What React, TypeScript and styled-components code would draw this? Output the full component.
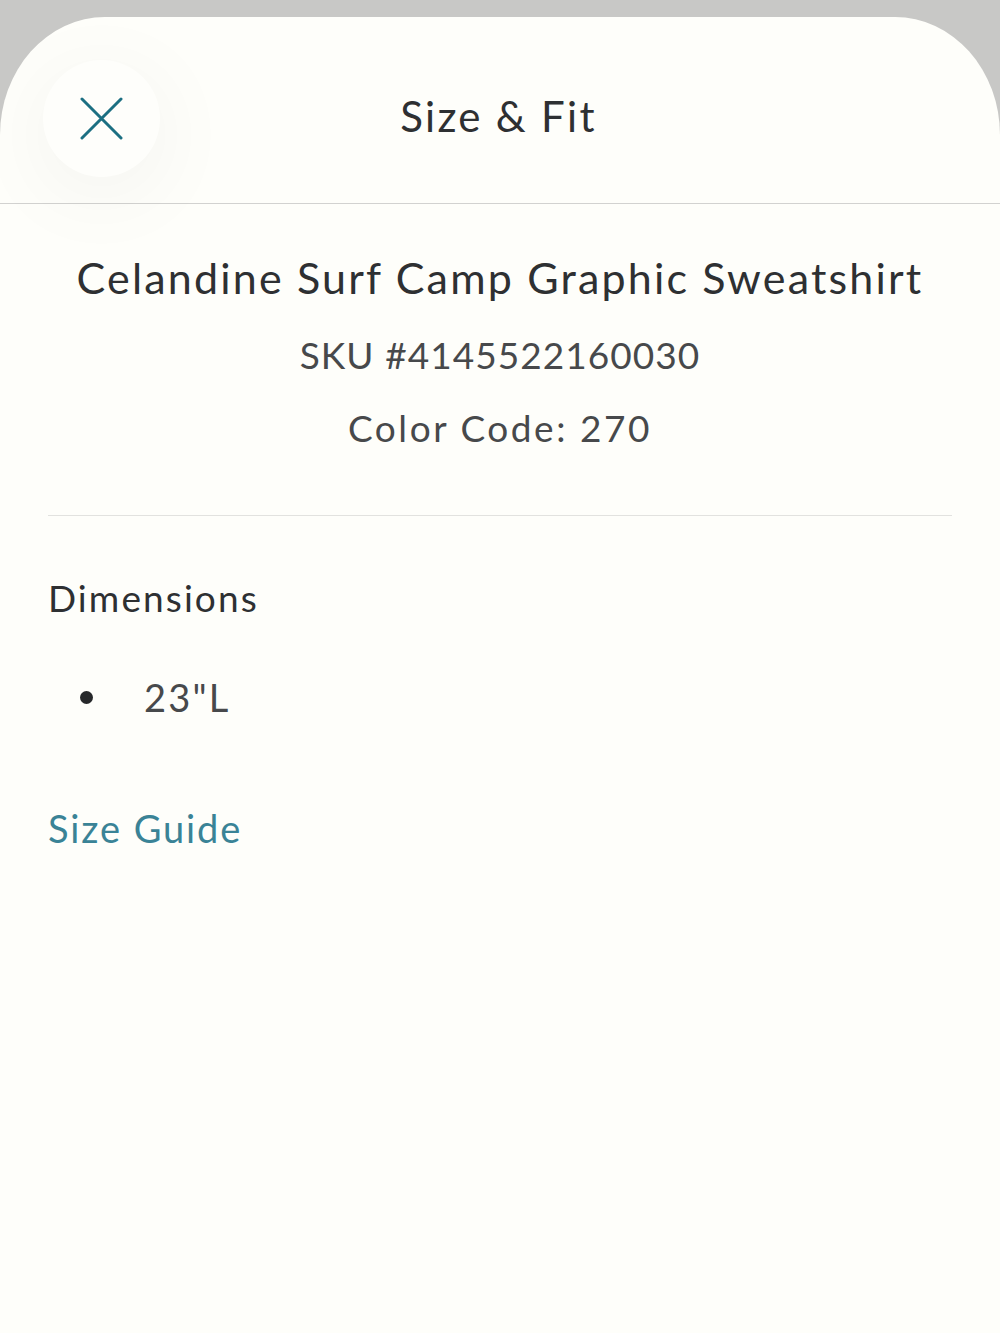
import React from "react";
import styled, { createGlobalStyle } from "styled-components";

const GlobalStyle = createGlobalStyle`
  html, body {
    margin: 0;
    padding: 0;
    background: #c8c8c6;
  }
`;

const Page = styled.div`
  width: 1000px;
  height: 1333px;
  padding-top: 17px;
  box-sizing: border-box;
  overflow: hidden;
  font-family: Lato, "Open Sans", sans-serif;
  color: #2e3032;
`;

const Sheet = styled.div`
  height: 1316px;
  background: #fefefa;
  border-radius: 105px 105px 0 0 / 118px 118px 0 0;
  overflow: hidden;
`;

const Header = styled.header`
  position: relative;
  height: 187px;
  box-sizing: border-box;
  display: flex;
  align-items: center;
  justify-content: center;
  border-bottom: 1px solid #d2d2d0;
  padding-top: 12px;
  padding-right: 3px;
`;

const CloseButton = styled.button`
  position: absolute;
  left: 43px;
  top: 43px;
  width: 117px;
  height: 117px;
  padding: 0;
  border: none;
  border-radius: 50%;
  background: #fefefb;
  box-shadow: 0 16px 90px rgba(0, 0, 0, 0.05);
  display: flex;
  align-items: center;
  justify-content: center;
`;

const HeaderTitle = styled.h1`
  margin: 0;
  font-size: 42px;
  font-weight: 400;
  letter-spacing: 2.3px;
  line-height: 50px;
`;

const Summary = styled.section`
  margin: 0 48px;
  padding: 46px 0 64px;
  display: flex;
  flex-direction: column;
  align-items: center;
  border-bottom: 1px solid #e2e2df;
`;

const ProductName = styled.h2`
  margin: 0;
  font-size: 43px;
  font-weight: 400;
  letter-spacing: 2.18px;
  line-height: 56px;
  white-space: nowrap;
`;

const Meta = styled.p<{ $gap: number; $tracking: number }>`
  margin: 0;
  font-size: 37px;
  font-weight: 400;
  color: #47494b;
  letter-spacing: ${(p) => p.$tracking}px;
  line-height: 46px;
  padding-top: ${(p) => p.$gap}px;
`;

const Details = styled.section`
  padding: 59px 48px 0;
`;

const SectionTitle = styled.h3`
  margin: 0;
  font-size: 37px;
  font-weight: 400;
  letter-spacing: 2.1px;
  line-height: 46px;
`;

const BulletList = styled.ul`
  margin: 53px 0 0;
  padding: 0;
  list-style: none;
`;

const BulletItem = styled.li`
  display: flex;
  align-items: center;
  font-size: 38px;
  font-weight: 400;
  color: #47494b;
  letter-spacing: 2.2px;
  line-height: 46px;
`;

const Bullet = styled.span`
  width: 13px;
  height: 13px;
  margin-left: 32px;
  margin-right: 51px;
  border-radius: 50%;
  background: #26282a;
`;

const GuideLink = styled.a`
  display: block;
  margin-top: 85px;
  color: #3a8396;
  font-size: 38px;
  font-weight: 400;
  letter-spacing: 1.9px;
  line-height: 46px;
`;

export default function App() {
  return (
    <Page>
      <GlobalStyle />
      <Sheet>
        <Header>
          <CloseButton aria-label="Close">
            <svg width="44" height="44" viewBox="0 0 44 44" fill="none">
              <path
                d="M2 2 L41 41 M41 2 L2 41"
                stroke="#1c6f82"
                strokeWidth="3"
                strokeLinecap="round"
              />
            </svg>
          </CloseButton>
          <HeaderTitle>Size &amp; Fit</HeaderTitle>
        </Header>
        <Summary>
          <ProductName>Celandine Surf Camp Graphic Sweatshirt</ProductName>
          <Meta $gap={26} $tracking={1.05}>SKU #4145522160030</Meta>
          <Meta $gap={27} $tracking={2.55}>Color Code: 270</Meta>
        </Summary>
        <Details>
          <SectionTitle>Dimensions</SectionTitle>
          <BulletList>
            <BulletItem>
              <Bullet />
              23"L
            </BulletItem>
          </BulletList>
          <GuideLink>Size Guide</GuideLink>
        </Details>
      </Sheet>
    </Page>
  );
}
